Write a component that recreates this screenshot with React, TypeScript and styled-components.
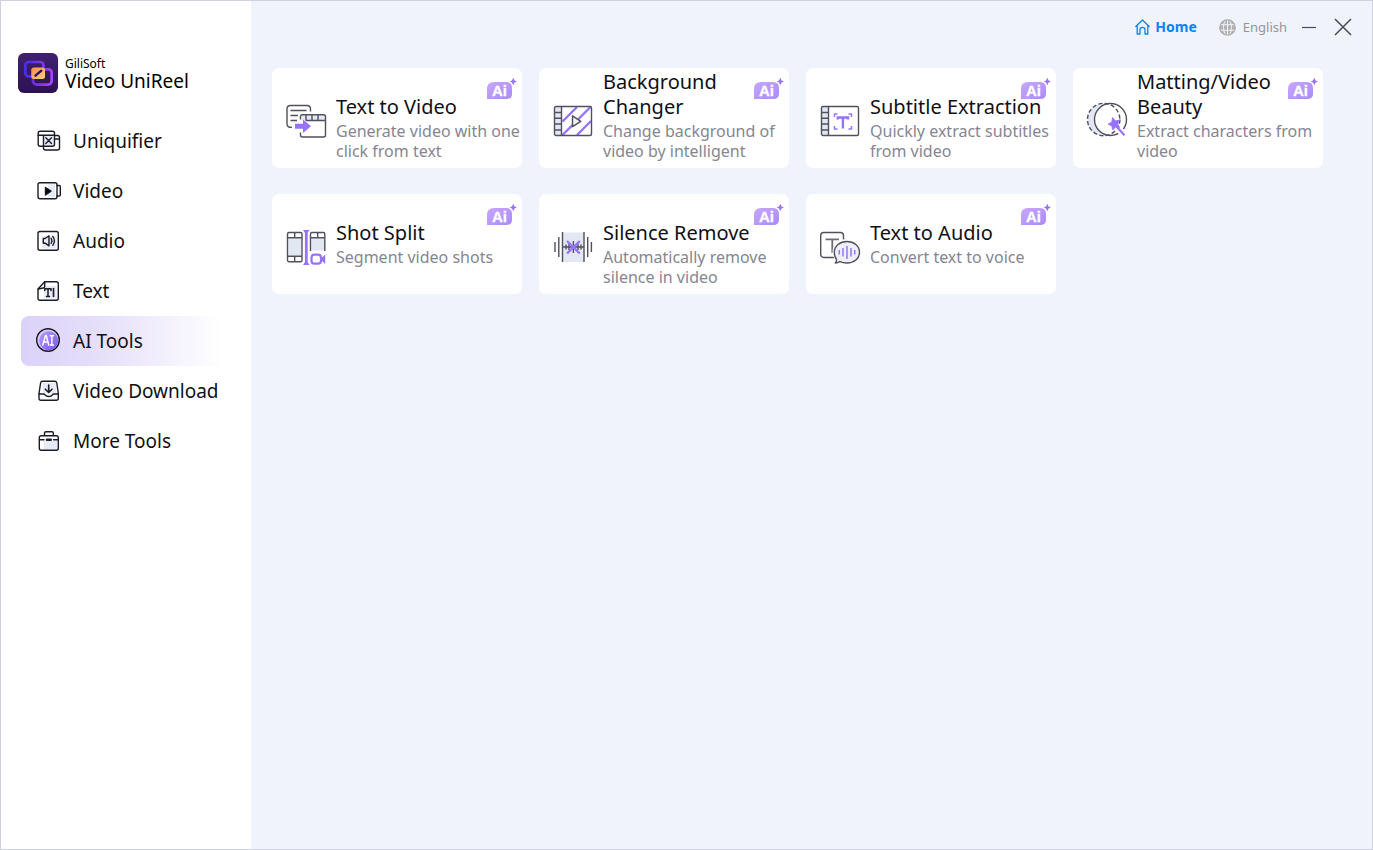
import React from "react";
import styled, { createGlobalStyle } from "styled-components";

const INK = "#1c1c28";
const LINE = "#50505e";
const TINT = "#e2e7f1";
const VIOLET = "#9673ff";

const GlobalStyle = createGlobalStyle`
  *, *::before, *::after { box-sizing: border-box; }
  body {
    margin: 0;
    font-family: "Noto Sans", "Open Sans", sans-serif;
    color: #101014;
  }
  button {
    margin: 0;
    padding: 0;
    border: 0;
    background: none;
    font: inherit;
    color: inherit;
    text-align: left;
    cursor: pointer;
  }
`;

const Window = styled.div`
  display: flex;
  min-height: 100vh;
  border: 1px solid #d0d1de;
  background: #f0f3fc;
`;

const Sidebar = styled.aside`
  flex: 0 0 250px;
  background: #ffffff;
`;

const Brand = styled.div`
  display: flex;
  align-items: center;
  gap: 7px;
  padding: 52px 0 0 17px;
  color: #000000;
`;

const BrandLogo = styled.svg`
  display: block;
  width: 40px;
  height: 40px;
`;

const BrandMaker = styled.div`
  font-size: 12px;
  line-height: 16px;
`;

const BrandName = styled.div`
  font-size: 19px;
  line-height: 18px;
`;

const Nav = styled.nav`
  display: flex;
  flex-direction: column;
  padding: 23px 24px 0 20px;
`;

const NavItem = styled.button<{ $active?: boolean }>`
  display: flex;
  align-items: center;
  gap: 11px;
  height: 50px;
  padding-left: 15px;
  border-radius: 8px;
  font-size: 19px;
  line-height: 26px;
  white-space: nowrap;
  background: ${(p) =>
    p.$active ? "linear-gradient(90deg, #dbd2f9 0%, #e6e0fa 40%, #ffffff 98%)" : "none"};
`;

const NavGlyph = styled.svg`
  flex: none;
  width: 26px;
  height: 26px;
  fill: none;
  stroke: ${INK};
  stroke-width: 1.4;
  stroke-linejoin: round;
  stroke-linecap: round;
`;

const Main = styled.main`
  flex: 1;
  min-width: 0;
`;

const TopBar = styled.header`
  display: flex;
  align-items: center;
  justify-content: flex-end;
  height: 52px;
  padding-right: 20px;
`;

const HomeButton = styled.button`
  display: flex;
  align-items: center;
  gap: 5px;
  margin-right: 22px;
  font-size: 14px;
  line-height: 20px;
  font-weight: 700;
  color: #0a84f0;
`;

const LanguageButton = styled.button`
  display: flex;
  align-items: center;
  gap: 7px;
  margin-right: 14px;
  font-size: 13px;
  line-height: 20px;
  color: #969696;
`;

const WindowButton = styled.button`
  display: flex;
  & + & {
    margin-left: 17px;
  }
`;

const CardGrid = styled.section`
  display: grid;
  grid-template-columns: repeat(auto-fill, 250px);
  gap: 26px 17px;
  padding: 15px 20px 20px 21px;
`;

const Card = styled.button`
  position: relative;
  display: flex;
  align-items: flex-start;
  gap: 10px;
  min-height: 100px;
  padding: 1px 0 6px 14px;
  border-radius: 7px;
  background: #ffffff;
`;

const CardGlyph = styled.svg`
  flex: none;
  width: 40px;
  height: 40px;
  margin-top: 32px;
  overflow: visible;
  fill: none;
  stroke: ${LINE};
  stroke-width: 1.4;
  stroke-linejoin: round;
`;

const CardText = styled.span`
  display: flex;
  flex-direction: column;
  gap: 2px;
  flex: 1;
  min-width: 0;
`;

const CardTitle = styled.span<{ $narrow?: boolean }>`
  display: flex;
  align-items: flex-end;
  min-height: 50px;
  padding-right: ${(p) => (p.$narrow ? "42px" : "0")};
  font-size: 20px;
  line-height: 25px;
`;

const CardNote = styled.span`
  display: block;
  font-size: 16px;
  line-height: 20px;
  color: #868692;
`;

const Badge = styled.svg`
  position: absolute;
  top: 10px;
  right: 5px;
  width: 30px;
  height: 22px;
  font-family: "Liberation Sans", sans-serif;
  font-size: 15px;
  font-weight: 700;
`;

const AiBadge = () => (
  <Badge viewBox="0 0 30 22">
    <defs>
      <linearGradient id="badgeFill" x1="0" y1="0" x2="1" y2="1">
        <stop offset="0" stopColor="#c9a6ff" />
        <stop offset="1" stopColor="#a68bfb" />
      </linearGradient>
    </defs>
    <path d="M0 21V11Q0 4 7 4H19Q25 4 25 10V16Q25 21 19 21Z" fill="url(#badgeFill)" />
    <path d="M26.300 -0.300L27.600 2.400L30 3.500L27.600 4.600L26.300 7.300L25 4.600L22.600 3.500L25 2.400Z" fill="#9a74f6" />
    <text x="5" y="18" fill="#ffffff" stroke="#ffffff" strokeWidth="0.300">Ai</text>
  </Badge>
);

const Logo = () => (
  <BrandLogo viewBox="0 0 40 40">
    <defs>
      <linearGradient id="logoBg" x1="0" y1="0" x2="0" y2="1">
        <stop offset="0" stopColor="#41216f" />
        <stop offset="1" stopColor="#2b1152" />
      </linearGradient>
      <linearGradient id="logoBack" x1="0" y1="0" x2="1" y2="0">
        <stop offset="0" stopColor="#4a2cf0" />
        <stop offset="1" stopColor="#7a3be0" />
      </linearGradient>
      <linearGradient id="logoFront" x1="0" y1="0" x2="1" y2="0">
        <stop offset="0" stopColor="#6a2fd0" />
        <stop offset="1" stopColor="#a840ff" />
      </linearGradient>
      <linearGradient id="logoCore" x1="0" y1="0" x2="1" y2="1">
        <stop offset="0" stopColor="#ff8a4c" />
        <stop offset="1" stopColor="#ffd27a" />
      </linearGradient>
    </defs>
    <rect width="40" height="40" rx="6" fill="url(#logoBg)" />
    <rect x="7.300" y="9" width="18.200" height="14.500" rx="3.500" fill="none" stroke="url(#logoBack)" strokeWidth="2.700" />
    <rect x="15" y="16.300" width="18.700" height="15.300" rx="3.500" fill="none" stroke="url(#logoFront)" strokeWidth="2.700" />
    <rect x="13.300" y="14.500" width="13.700" height="11.500" rx="2.500" fill="url(#logoCore)" />
    <path d="M17.500 22.700L23.300 17.700" stroke="#2c1254" strokeWidth="2.400" strokeLinecap="round" />
  </BrandLogo>
);

const UniquifierGlyph = () => (
  <NavGlyph viewBox="0 0 26 26">
    <rect x="7.500" y="7.500" width="11" height="10.500" fill="#e6ebf6" stroke="none" />
    <rect x="2.200" y="3.200" width="16.300" height="15" rx="2" />
    <path d="M2.200 7.200H18.500" />
    <path d="M18.500 7.500H21.500Q23.500 7.500 23.500 9.500V20Q23.500 22 21.500 22H9.500Q7.500 22 7.500 20V7.500M18.500 11H23.500" />
    <path d="M9.800 9.800L15.500 15.500M15.500 9.800L9.800 15.500" />
  </NavGlyph>
);

const VideoGlyph = () => (
  <NavGlyph viewBox="0 0 26 26">
    <rect x="12" y="6" width="7" height="13" fill="#e6ebf6" stroke="none" />
    <rect x="2" y="4.700" width="19" height="16" rx="2" />
    <path d="M21 7.500H23.200Q24.300 7.500 24.300 8.500V17Q24.300 18 23.200 18H21" />
    <path d="M9.500 9.500L15 13.200L9.500 17Z" fill="#000" />
  </NavGlyph>
);

const AudioGlyph = () => (
  <NavGlyph viewBox="0 0 26 26">
    <rect x="6" y="8" width="14.500" height="12.500" fill="#e6ebf6" stroke="none" />
    <rect x="2" y="3.500" width="20.300" height="18.800" rx="2" />
    <path d="M7.300 10.500H9.200L13 7.800V17.800L9.200 15.200H7.300Z" />
    <path d="M15.200 10.300Q16.700 12.800 15.200 15.300M16.800 8.300Q20 12.800 16.800 17.300" strokeWidth="1.400" />
  </NavGlyph>
);

const TextGlyph = () => (
  <NavGlyph viewBox="0 0 26 26">
    <rect x="8" y="8" width="12.500" height="12.500" fill="#e6ebf6" stroke="none" />
    <path d="M8.700 3.700H20.300Q22.300 3.700 22.300 5.700V20.300Q22.300 22.300 20.300 22.300H4Q2 22.300 2 20.300V11Z" />
    <path d="M8.700 3.700V8.500Q8.700 9.800 7.300 10L2.300 11" />
    <path d="M8.800 12.500V10.700H15V12.500M12 10.700V18.300M10.500 18.500H13.500" strokeWidth="1.500" />
    <path d="M17.500 10.500V18.500" strokeWidth="1.600" />
  </NavGlyph>
);

const AiGlyph = () => (
  <NavGlyph viewBox="0 0 26 26">
    <defs>
      <linearGradient id="aiDisc" x1="0" y1="0" x2="1" y2="1">
        <stop offset="0" stopColor="#b49cff" />
        <stop offset="1" stopColor="#7a55f5" />
      </linearGradient>
    </defs>
    <circle cx="12" cy="12" r="11.300" fill="#d5c9fd" stroke="#17171f" />
    <circle cx="12.700" cy="12.700" r="9.500" fill="url(#aiDisc)" stroke="none" />
    <path d="M6.800 17L9.500 7.500H10.300L12.700 17M7.800 14H12M14.300 7.700H17.500M15.900 7.700V17M14.300 17H17.500" stroke="#ffffff" strokeWidth="1.400" />
  </NavGlyph>
);

const DownloadGlyph = () => (
  <NavGlyph viewBox="0 0 26 26">
    <rect x="7" y="5" width="13" height="10" fill="#e6ebf6" stroke="none" />
    <path d="M6.700 3.200H18.700Q20.500 3.200 20.800 5L22.300 15.500V20.300Q22.300 22.300 20.300 22.300H5Q3 22.300 3 20.300V15.500L4.600 5Q4.900 3.200 6.700 3.200Z" />
    <path d="M3 16H7.500Q8.500 16 9.200 17Q10 18.500 12.700 18.500Q15.500 18.500 16.300 17Q17 16 18 16H22.300" />
    <path d="M12.700 7V14.300M9.300 11.200L12.700 14.500L16 11.200" strokeWidth="1.600" />
  </NavGlyph>
);

const MoreGlyph = () => (
  <NavGlyph viewBox="0 0 26 26">
    <rect x="8" y="13" width="13" height="8.500" fill="#e6ebf6" stroke="none" />
    <rect x="3.300" y="7.700" width="19" height="14.600" rx="2" />
    <path d="M8.500 7.500V5Q8.500 3.700 10 3.700H16Q17.300 3.700 17.300 5V7.500M3.500 11.700H8M17.500 11.700H22" />
    <path d="M11 11.700H14.700" strokeWidth="2.600" />
  </NavGlyph>
);

const TextToVideoGlyph = () => (
  <CardGlyph viewBox="0 0 40 40">
    <path d="M6 26.300Q1 26.800 1 22.500V8Q1 4.500 4.500 4.500H21Q24.500 4.500 24.500 8V10.500" />
    <path d="M4.500 9.500H20.500M4.500 14.500H12M4.500 19.500H11" />
    <rect x="16" y="14.500" width="23" height="5" fill={TINT} stroke="none" />
    <path d="M14.500 18.500V15.500Q14.500 13.700 16.500 13.700H37.500Q39.500 13.700 39.500 15.500V34Q39.500 36 37.500 36H16.500Q14.500 36 14.500 34V31.500M19.500 19.500H39.500M20 14V19M26 14V19.500M32 14V19.500" />
    <path d="M9 22.700H17V18.500L25 25.200L17 32V27.700H9Z" fill={VIOLET} stroke="none" />
  </CardGlyph>
);

const FilmFrame = () => (
  <>
    <rect x="2" y="6" width="6" height="28" fill={TINT} stroke="none" />
    <rect x="1.500" y="5.500" width="37" height="29" rx="1.500" />
    <path d="M8.500 5.500V34.500M1.500 11.500H8.500M1.500 17.300H8.500M1.500 23H8.500M1.500 29H8.500" />
  </>
);

const BackgroundGlyph = () => (
  <CardGlyph viewBox="0 0 40 40">
    <path d="M9.500 20.500L24 6M9.500 34L37.500 6M24 34L38 20" stroke={VIOLET} strokeWidth="2.400" />
    <FilmFrame />
    <path d="M19.500 14.800L27.800 20.300L19.500 25.700Z" fill="#f2f3f8" />
  </CardGlyph>
);

const SubtitleGlyph = () => (
  <CardGlyph viewBox="0 0 40 40">
    <FilmFrame />
    <path d="M14.500 16V13H17.500M28.500 13H31.500V16M31.500 25V28H28.500M17.500 28H14.500V25" stroke={VIOLET} strokeWidth="1.500" />
    <path d="M17.800 18.500V16.500H28V18.500M22.900 16.500V27.500" stroke={VIOLET} strokeWidth="2.400" strokeLinejoin="miter" />
  </CardGlyph>
);

const MattingGlyph = () => (
  <CardGlyph viewBox="0 0 40 40">
    <path d="M17 2.300A16.200 16.200 0 0 0 17 34.700H23.500A16.200 16.200 0 0 1 23.500 2.300Z" fill={TINT} stroke="none" />
    <circle cx="23.500" cy="18.500" r="16" fill="#ffffff" />
    <circle cx="16.700" cy="18.500" r="16.200" strokeDasharray="4.200 2.200" />
    <path d="M29 25L39 36" stroke="#ffffff" strokeWidth="7" />
    <path d="M29 25L37.500 34.200" stroke={VIOLET} strokeWidth="2.200" />
    <path d="M25.500 16.500L28.300 19.800L32.500 19.300L30.700 23L32.700 26.700L28.600 26L25.600 29L24.900 24.900L21 23.200L24.800 21Z" fill={VIOLET} stroke={VIOLET} strokeWidth="0.800" />
  </CardGlyph>
);

const ShotSplitGlyph = () => (
  <CardGlyph viewBox="0 0 40 40">
    <rect x="2.500" y="11.500" width="12.500" height="17" fill={TINT} stroke="none" />
    <rect x="25.500" y="11.500" width="12.500" height="12" fill={TINT} stroke="none" />
    <rect x="1.500" y="5.500" width="14.500" height="29.300" rx="1.500" />
    <path d="M1.500 10.800H16M1.500 29.200H16M8.700 5.500V10.800M8.700 29.200V34.800" />
    <path d="M24.500 24V7Q24.500 5.500 26 5.500H37.300Q38.800 5.500 38.800 7V24M24.500 10.800H38.800M31.700 5.500V10.800" />
    <path d="M20.300 4V37" stroke={VIOLET} strokeWidth="2.800" />
    <path d="M17 3H23.600L21.500 6H19.100ZM17 38H23.600L21.500 35H19.100Z" fill={VIOLET} stroke="none" />
    <rect x="25.500" y="27.700" width="9.500" height="9" rx="3" stroke={VIOLET} strokeWidth="2.200" />
    <path d="M35.500 31L39.200 27.500V37L35.500 33.500Z" fill={VIOLET} stroke="none" />
  </CardGlyph>
);

const SilenceGlyph = () => (
  <CardGlyph viewBox="0 0 40 40">
    <rect x="9.500" y="5.500" width="21.500" height="29.500" fill={TINT} stroke="none" />
    <path d="M2 15V25M5.800 10V30M9.500 5V35M31 5V35M34.700 10V30M38.400 15V25" />
    <path d="M9.500 20H31M13 17.500V22.500M16 17V23M20.400 14V26M25 17V23M28 17.500V22.500" />
    <path d="M14 14L26.800 26.500M26.800 14L14 26.500" stroke={VIOLET} strokeWidth="2.400" />
  </CardGlyph>
);

const TextToAudioGlyph = () => (
  <CardGlyph viewBox="0 0 40 40">
    <rect x="0.700" y="5.500" width="22.800" height="25" rx="3" />
    <path d="M5.500 12.300H19M12.300 12.300V26" stroke="#6c6c78" strokeWidth="1.800" />
    <ellipse cx="27" cy="25" rx="14.500" ry="13" fill="#ffffff" stroke="none" />
    <path d="M15.300 36Q17 34.500 16.300 32Q14.300 29 14.300 25.300C14.300 19 20 14.500 27 14.500S39.500 19 39.500 25.300S34 36 27 36Q22.500 36 20 34.700Q18 36 15.300 36Z" fill="#eef0f6" />
    <path d="M19.300 23V27.500M23 21V29.500M27 19V32M31 21V29.500M34.700 23V27.500" stroke={VIOLET} strokeWidth="1.500" />
  </CardGlyph>
);

const navItems = [
  { label: "Uniquifier", Glyph: UniquifierGlyph },
  { label: "Video", Glyph: VideoGlyph },
  { label: "Audio", Glyph: AudioGlyph },
  { label: "Text", Glyph: TextGlyph },
  { label: "AI Tools", Glyph: AiGlyph, active: true },
  { label: "Video Download", Glyph: DownloadGlyph },
  { label: "More Tools", Glyph: MoreGlyph },
];

const tools = [
  { title: "Text to Video", note: "Generate video with one click from text", Glyph: TextToVideoGlyph },
  { title: "Background Changer", note: "Change background of video by intelligent", Glyph: BackgroundGlyph, narrow: true },
  { title: "Subtitle Extraction", note: "Quickly extract subtitles from video", Glyph: SubtitleGlyph },
  { title: "Matting/Video Beauty", note: "Extract characters from video", Glyph: MattingGlyph, narrow: true },
  { title: "Shot Split", note: "Segment video shots", Glyph: ShotSplitGlyph },
  { title: "Silence Remove", note: "Automatically remove silence in video", Glyph: SilenceGlyph },
  { title: "Text to Audio", note: "Convert text to voice", Glyph: TextToAudioGlyph },
];

export default function App() {
  return (
    <>
      <GlobalStyle />
      <Window>
        <Sidebar>
          <Brand>
            <Logo />
            <div>
              <BrandMaker>GiliSoft</BrandMaker>
              <BrandName>Video UniReel</BrandName>
            </div>
          </Brand>
          <Nav>
            {navItems.map(({ label, Glyph, active }) => (
              <NavItem key={label} type="button" $active={active} aria-current={active ? "page" : undefined}>
                <Glyph />
                {label}
              </NavItem>
            ))}
          </Nav>
        </Sidebar>
        <Main>
          <TopBar>
            <HomeButton type="button">
              <svg width="15" height="16" viewBox="0 0 15 16" fill="none" stroke="currentColor" strokeWidth="1.300" strokeLinejoin="round" strokeLinecap="round">
                <path d="M0.800 7.500L7.500 1L14.200 7.500M2.200 6.300V15H5V10.500Q5 8.300 7.500 8.300T10 10.500V15H12.800V6.300" />
              </svg>
              Home
            </HomeButton>
            <LanguageButton type="button">
              <svg width="17" height="17" viewBox="0 0 17 17">
                <circle cx="8.500" cy="8.500" r="8" fill="#b2b2b2" />
                <g fill="none" stroke="#f0f3fc" strokeWidth="1">
                  <ellipse cx="8.500" cy="8.500" rx="4" ry="8" />
                  <path d="M8.500 0V17M0.500 5.700H16.500M0.500 11.300H16.500" />
                </g>
                <circle cx="8.500" cy="8.500" r="7.700" fill="none" stroke="#adadad" strokeWidth="1.200" />
              </svg>
              English
            </LanguageButton>
            <WindowButton type="button" aria-label="Minimize">
              <svg width="16" height="18" viewBox="0 0 16 18" stroke="#454b55" strokeWidth="1.200">
                <path d="M1 9.500H15" />
              </svg>
            </WindowButton>
            <WindowButton type="button" aria-label="Close">
              <svg width="18" height="18" viewBox="0 0 18 18" stroke="#454b55" strokeWidth="1.500">
                <path d="M1 1L17 17M17 1L1 17" />
              </svg>
            </WindowButton>
          </TopBar>
          <CardGrid>
            {tools.map(({ title, note, Glyph, narrow }) => (
              <Card key={title} type="button">
                <Glyph />
                <CardText>
                  <CardTitle $narrow={narrow}>{title}</CardTitle>
                  <CardNote>{note}</CardNote>
                </CardText>
                <AiBadge />
              </Card>
            ))}
          </CardGrid>
        </Main>
      </Window>
    </>
  );
}
